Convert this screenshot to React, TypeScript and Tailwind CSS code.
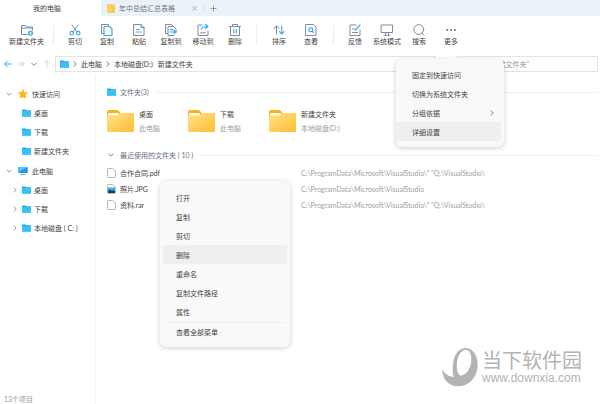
import type { ReactNode } from 'react';

interface Tool {
  label: string;
  icon: ReactNode;
}

const stroke = { fill: 'none', stroke: '#8288a0', strokeWidth: 1 } as const;
const accent = { fill: 'none', stroke: '#35aef5', strokeWidth: 1.2 } as const;

function Icon({ children }: { children: ReactNode }) {
  return (
    <svg className="h-3 w-3 overflow-visible" viewBox="0 0 12 12" strokeLinecap="round" strokeLinejoin="round">
      {children}
    </svg>
  );
}

const newTools: Tool[] = [
  {
    label: '新建文件夹',
    icon: (
      <Icon>
        <path {...stroke} d="M6 10.500H.5v-9h4l1 1.500h6V6M.5 4h11" />
        <circle cx="9.500" cy="9" r="2.600" fill="#35aef5" />
        <path d="M8.300 9h2.400M9.500 7.800v2.400" stroke="#fff" strokeWidth=".7" />
      </Icon>
    ),
  },
];

const editTools: Tool[] = [
  {
    label: '剪切',
    icon: (
      <Icon>
        <path {...stroke} d="M3 1l5 7M9 1L4 8" />
        <circle {...accent} cx="2.800" cy="9.200" r="1.800" />
        <circle {...accent} cx="9.200" cy="9.200" r="1.800" />
      </Icon>
    ),
  },
  {
    label: '复制',
    icon: (
      <Icon>
        <path {...stroke} d="M2.500 9.500h-2v-9h7v2" />
        <path {...accent} d="M3 2.500h5.500l2.500 2.500v6.500H3z" />
      </Icon>
    ),
  },
  {
    label: '粘贴',
    icon: (
      <Icon>
        <path {...stroke} d="M1 .5h7L11 3.500v8H1zM8 .5v3h3" />
        <path {...accent} d="M3.500 5.500h3M3.500 8h5" />
      </Icon>
    ),
  },
  {
    label: '复制到',
    icon: (
      <Icon>
        <path {...stroke} d="M2.500 9.500h-2v-9h6l2 2M9 11.500H3v-9h5.500l2.500 2.500v3" />
        <path {...accent} d="M5 5.500h3M5 8h5M9 6.500l2 1.500-2 1.500" />
      </Icon>
    ),
  },
  {
    label: '移动到',
    icon: (
      <Icon>
        <path {...stroke} d="M5 1H1v10.500h10V7M3.500 8.800h5" />
        <path {...accent} d="M4.500 5.500c0-2 1.500-3 6-3M8.500.5l2.500 2-2.500 2" />
      </Icon>
    ),
  },
  {
    label: '删除',
    icon: (
      <Icon>
        <path {...stroke} d="M.5 2.500h11M3.500 2.500v-2h5v2M1.500 2.500v9h9v-9" />
        <path {...accent} d="M4.700 5.500v3.500M7.300 5.500v3.500" />
      </Icon>
    ),
  },
];

const viewTools: Tool[] = [
  {
    label: '排序',
    icon: (
      <Icon>
        <path {...stroke} d="M3.500 10V2M1 4.500L3.500 2 6 4.500" />
        <path {...accent} d="M8.700 2v8M6.500 7.700L8.700 10l2.300-2.300" />
      </Icon>
    ),
  },
  {
    label: '查看',
    icon: (
      <Icon>
        <path {...stroke} d="M1 .5h7.500L11 3v8.500H1z" />
        <circle {...accent} cx="5.800" cy="5.800" r="1.900" />
        <path {...accent} d="M7.300 7.300l1.200 1.200" />
      </Icon>
    ),
  },
];

const systemTools: Tool[] = [
  {
    label: '反馈',
    icon: (
      <Icon>
        <path {...stroke} d="M7 1H1v10.500h10V6M3.500 5h2M3.500 8.500h5" />
        <path {...accent} d="M6.500 6L11 1" />
      </Icon>
    ),
  },
  {
    label: '系统模式',
    icon: (
      <Icon>
        <path {...stroke} d="M.5 1h11v7.500H.5zM4.500 8.500v2.500M7.500 8.500v2.500M3 11.300h6" />
      </Icon>
    ),
  },
  {
    label: '搜索',
    icon: (
      <Icon>
        <circle {...stroke} cx="5.800" cy="5.500" r="4.900" />
        <path {...stroke} d="M9 9.200l1.800 2" />
      </Icon>
    ),
  },
  {
    label: '更多',
    icon: (
      <Icon>
        <g fill="#69718f">
          <circle cx="2.200" cy="6" r="1" />
          <circle cx="6" cy="6" r="1" />
          <circle cx="9.800" cy="6" r="1" />
        </g>
      </Icon>
    ),
  },
];

const folders = [
  { name: '桌面', place: '此电脑' },
  { name: '下载', place: '此电脑' },
  { name: '新建文件夹', place: '本地磁盘(D:)' },
];

const files = [
  { name: '合作合同.pdf', path: 'C:\\ProgramData\\Microsoft\\VisualStudio\\" "Q:\\VisualStudio\\', image: false },
  { name: '照片.JPG', path: 'C:\\ProgramData\\Microsoft\\VisualStudio', image: true },
  { name: '资料.rar', path: 'C:\\ProgramData\\Microsoft\\VisualStudio\\" "Q:\\VisualStudio\\', image: false },
];

const contextItems = ['打开', '复制', '剪切', '删除', '重命名', '复制文件路径', '属性'];
const moreItems = ['固定到快速访问', '切换为系统文件夹', '分组依据', '详细设置'];

function Chevron({ down = false, className = '' }: { down?: boolean; className?: string }) {
  return (
    <svg className={`h-[6px] w-[6px] shrink-0 ${className}`} viewBox="0 0 6 6" fill="none" stroke="currentColor" strokeWidth=".9">
      <path d={down ? 'M.6 1.800L3 4.200l2.400-2.400' : 'M1.800.6L4.200 3 1.800 5.400'} />
    </svg>
  );
}

function BlueFolder() {
  return (
    <svg className="h-[8px] w-[9px] shrink-0" viewBox="0 0 9 8">
      <path d="M0 1.200Q0 .4.8.4h2.600l.8.9H9V7.600H0z" fill="#1ba5e3" />
      <path d="M0 2h9v5.600H0z" fill="#35c2fa" />
    </svg>
  );
}

function YellowFolder() {
  return (
    <svg className="h-[26px] w-[27px] shrink-0" viewBox="0 0 27 26">
      <defs>
        <linearGradient id="folder" x1="0" y1="0" x2="1" y2="1">
          <stop offset="0" stopColor="#ffe18a" />
          <stop offset="1" stopColor="#fcbf32" />
        </linearGradient>
      </defs>
      <path d="M0 4Q0 2 2 2h8q1 0 1.600.8L13.500 5H25q2 0 2 2v8H0z" fill="#f6b21b" />
      <path d="M1 5h11v4H1z" fill="#fff6dc" />
      <path d="M0 7.500h11L13.500 5H25q2 0 2 2v15.500q0 1.500-1.500 1.500h-24Q0 24 0 22.500z" fill="url(#folder)" />
    </svg>
  );
}

function FileIcon({ image }: { image: boolean }) {
  return (
    <svg className="h-[10px] w-[9px] shrink-0" viewBox="0 0 9 10">
      <path d="M1.300.5h4.400L8.500 3v5.700q0 .8-.8.8H1.300q-.8 0-.8-.8V1.300q0-.8.8-.8z" fill="#fff" stroke="#a5a5a5" strokeWidth=".8" />
      {image && <path d="M1 3.500h7V9H1z" fill="#32b4ee" />}
      {image && <path d="M1 9V7l2-1.500L5 7l1.500-1L8 7.500V9z" fill="#123f78" />}
    </svg>
  );
}

function ToolGroup({ tools, wide = false }: { tools: Tool[]; wide?: boolean }) {
  return (
    <div className="flex">
      {tools.map((t) => (
        <button key={t.label} type="button" className={`flex flex-col items-center whitespace-nowrap ${wide ? 'w-[53px]' : 'w-8'}`}>
          {t.icon}
          <span className="leading-[10px]">{t.label}</span>
        </button>
      ))}
    </div>
  );
}

function Divider() {
  return <div className="h-5 w-px bg-[#ececee]" />;
}

function SideItem({ label, arrow = false }: { label: string; arrow?: boolean }) {
  return (
    <li>
      <button type="button" className="flex h-[19px] w-full items-center pl-[12px] text-left">
        <span className="w-[10px] text-[#8a8fa3]">{arrow && <Chevron />}</span>
        <BlueFolder />
        <span className="pl-[3px]">{label}</span>
      </button>
    </li>
  );
}

function Sidebar() {
  return (
    <nav className="flex w-24 shrink-0 flex-col border-r border-[#f3f3f5] pt-[9px]">
      <button type="button" className="flex h-[19px] items-center pl-[6px] text-left">
        <Chevron down className="text-[#8a8fa3]" />
        <svg className="ml-[6px] h-[10px] w-[10px]" viewBox="0 0 10 10">
          <path d="M5 .5l1.400 2.900 3.200.4-2.300 2.200.6 3.200L5 7.700 2.100 9.200l.6-3.200L.4 3.800l3.200-.4z" fill="#fdb813" stroke="#fdb813" strokeWidth=".6" strokeLinejoin="round" />
        </svg>
        <span className="pl-1">快速访问</span>
      </button>
      <ul>
        <SideItem label="桌面" />
        <SideItem label="下载" />
        <SideItem label="新建文件夹" />
      </ul>
      <button type="button" className="mt-px flex h-[19px] items-center pl-[6px] text-left">
        <Chevron down className="text-[#8a8fa3]" />
        <svg className="ml-[6px] h-[10px] w-[10px]" viewBox="0 0 10 10">
          <path d="M.3 1h9.400v6H.3z" fill="#2299e8" />
          <path d="M.3 1h9.400L.3 6z" fill="#4fc4f8" />
          <path d="M2 8.500h6" stroke="#8fb0c8" />
        </svg>
        <span className="pl-1">此电脑</span>
      </button>
      <ul>
        <SideItem label="桌面" arrow />
        <SideItem label="下载" arrow />
        <SideItem label="本地磁盘 ( C: )" arrow />
      </ul>
      <p className="mt-auto pl-1 leading-[10px] text-[#999]">13个项目</p>
    </nav>
  );
}

function SectionTitle({ icon, children }: { icon: ReactNode; children: ReactNode }) {
  return (
    <h2 className="flex items-center text-[#667089]">
      <span className="flex w-[13px]">{icon}</span>
      <span className="leading-[10px]">{children}</span>
      <span className="ml-[7px] h-px flex-1 bg-[#f1f1f3]" />
    </h2>
  );
}

function ContextMenu() {
  return (
    <div role="menu" className="absolute top-[181px] left-[160px] w-[130px] rounded-md bg-[#f9f9f9] px-[3px] py-[7px] shadow-[0_1px_5px_rgba(0,0,0,0.2)]">
      {contextItems.map((item) => (
        <button
          key={item}
          type="button"
          role="menuitem"
          className={`flex h-[19px] w-full items-center pl-[13px] ${item === '删除' ? 'bg-[#efefef]' : ''}`}
        >
          {item}
        </button>
      ))}
      <div className="mx-[3px] my-px h-px bg-[#eeeeee]" />
      <button type="button" role="menuitem" className="flex h-4 w-full items-center pl-[13px]">
        查看全部菜单
      </button>
    </div>
  );
}

function MoreMenu() {
  return (
    <div role="menu" className="absolute top-[59px] left-[396px] w-[108px] rounded-md bg-[#f9f9f9] py-[6px] pr-[3px] shadow-[0_1px_5px_rgba(0,0,0,0.2)]">
      <span className="absolute -top-[4px] left-[52px] h-0 w-0 border-x-[5px] border-b-[4px] border-x-transparent border-b-[#f9f9f9]" />
      {moreItems.map((item) => (
        <button
          key={item}
          type="button"
          role="menuitem"
          className={`flex h-[19px] w-full items-center justify-between pr-[6px] pl-4 ${item === '详细设置' ? 'bg-[#efefef]' : ''}`}
        >
          {item}
          {item === '分组依据' && <Chevron className="text-[#69718f]" />}
        </button>
      ))}
    </div>
  );
}

function Watermark() {
  return (
    <div className="absolute right-[18px] bottom-[17px] flex items-center gap-[4px] text-[#b3b3b3]">
      <svg className="h-10 w-[37px]" viewBox="2 50 111 120" fill="currentColor">
        <path
          fillRule="evenodd"
          d="M76 53C98 54 112 76 112 104C111 141 87 168 52 168C25 168 7 148 5 117C14 132 26 139 40 140C33 108 39 54 76 53ZM76 58C55 60 47 91 50 118C52 131 58 138 66 135C82 130 92 110 93 88C93 71 88 58 76 58Z"
        />
      </svg>
      <div>
        <p className="text-[20px] leading-[22px]">当下软件园</p>
        <p className="font-['Liberation_Sans',sans-serif] text-[12px] leading-[14px]">www.downxia.com</p>
      </div>
    </div>
  );
}

export default function App() {
  return (
    <div className="relative flex min-h-screen flex-col bg-white font-['Lato','Noto_Sans_CJK_SC',sans-serif] text-[7px] leading-[10px] text-[#444]">
      <div role="tablist" className="flex h-4 items-center bg-[#ebf3fa]">
        <button type="button" role="tab" aria-selected="true" className="h-4 w-[101px] bg-white pr-[7px]">
          我的电脑
        </button>
        <button type="button" role="tab" aria-selected="false" className="flex h-4 w-[84px] items-center pl-[6px] text-[#777]">
          <svg className="h-[9px] w-[8px]" viewBox="0 0 8 9">
            <path d="M0 0h5l3 3v6H0z" fill="#ffd15c" />
            <path d="M5 0h3v9H5z" fill="#fbc02d" opacity=".5" />
          </svg>
          <span className="pl-1 whitespace-nowrap">年中总结汇总表格</span>
        </button>
        <button type="button" aria-label="关闭" className="flex w-[18px] justify-center">
          <svg className="h-[5px] w-[5px]" viewBox="0 0 5 5" stroke="#888" strokeWidth=".7">
            <path d="M.5.5l4 4M4.500.5l-4 4" />
          </svg>
        </button>
        <span className="h-2 w-px bg-[#dbe2e8]" />
        <button type="button" aria-label="新建标签" className="flex w-[18px] justify-center">
          <svg className="h-[7px] w-[7px]" viewBox="0 0 7 7" stroke="#888" strokeWidth=".8">
            <path d="M3.500.5v6M.5 3.500h6" />
          </svg>
        </button>
      </div>

      <div className="flex h-[38px] items-center">
        <ToolGroup tools={newTools} wide />
        <Divider />
        <div className="px-[5px]">
          <ToolGroup tools={editTools} />
        </div>
        <Divider />
        <div className="px-[6px]">
          <ToolGroup tools={viewTools} />
        </div>
        <Divider />
        <div className="px-[5px]">
          <ToolGroup tools={systemTools} />
        </div>
      </div>

      <div className="mt-[2px] flex h-4 items-center pr-[2px]">
        <div className="flex w-[55px] items-center gap-[5px] pl-[4px]">
          {[
            { label: '后退', d: 'M7.500 4h-7M3.500 1L.5 4l3 3', color: 'text-[#35aef5]' },
            { label: '前进', d: 'M.5 4h7M4.500 1l3 3-3 3', color: 'text-[#d5d5da]' },
            { label: '历史', d: 'M1.500 3L4 5.500 6.500 3', color: 'text-[#7d8296]' },
            { label: '向上', d: 'M4 7.500v-7M1 3.500l3-3 3 3', color: 'text-[#d5d5da]' },
          ].map((nav) => (
            <button key={nav.label} type="button" aria-label={nav.label} className={nav.color}>
              <svg className="h-2 w-2" viewBox="0 0 8 8" fill="none" stroke="currentColor">
                <path d={nav.d} />
              </svg>
            </button>
          ))}
        </div>
        <div className="flex h-4 flex-1 items-center border border-[#e3e3e6] pl-[4px] whitespace-nowrap">
          <BlueFolder />
          <Chevron className="mx-[3px] text-[#69718f]" />
          <a href="#pc">此电脑</a>
          <Chevron className="mx-[3px] text-[#69718f]" />
          <a href="#d">本地磁盘(D:)</a>
          <a href="#new" className="pl-[5px]">新建文件夹</a>
        </div>
        <label className="ml-[22px] flex h-4 w-[141px] items-center border border-[#e3e3e6]">
          <input
            aria-label="搜索"
            defaultValue={'搜索"新建文件夹"'}
            className="w-full pl-[17px] text-[#999] outline-none"
          />
        </label>
      </div>

      <div className="flex flex-1 pt-[3px]">
        <Sidebar />
        <main className="min-w-0 flex-1 pt-[12px] pr-[2px] pl-[11px]">
          <SectionTitle icon={<BlueFolder />}>文件夹(3)</SectionTitle>
          <div className="mt-[11px] flex gap-[2px]">
            {folders.map((f) => (
              <button key={f.name} type="button" className="flex w-[79px] items-center gap-[5px] text-left whitespace-nowrap">
                <YellowFolder />
                <span className="flex flex-col gap-[4px]">
                  <span>{f.name}</span>
                  <span className="text-[#a0a0a0]">{f.place}</span>
                </span>
              </button>
            ))}
          </div>
          <div className="mt-4">
            <SectionTitle icon={<Chevron down className="ml-px" />}>最近使用的文件夹 ( 10 )</SectionTitle>
          </div>
          <table className="mt-[5px] w-full text-left">
            <tbody>
              {files.map((f) => (
                <tr key={f.name} className="h-4">
                  <td className="w-[194px] p-0">
                    <span className="flex items-center gap-[4px]">
                      <FileIcon image={f.image} />
                      {f.name}
                    </span>
                  </td>
                  <td className="p-0 text-[#a0a0a0]">{f.path}</td>
                </tr>
              ))}
            </tbody>
          </table>
        </main>
      </div>

      <ContextMenu />
      <MoreMenu />
      <Watermark />
    </div>
  );
}
